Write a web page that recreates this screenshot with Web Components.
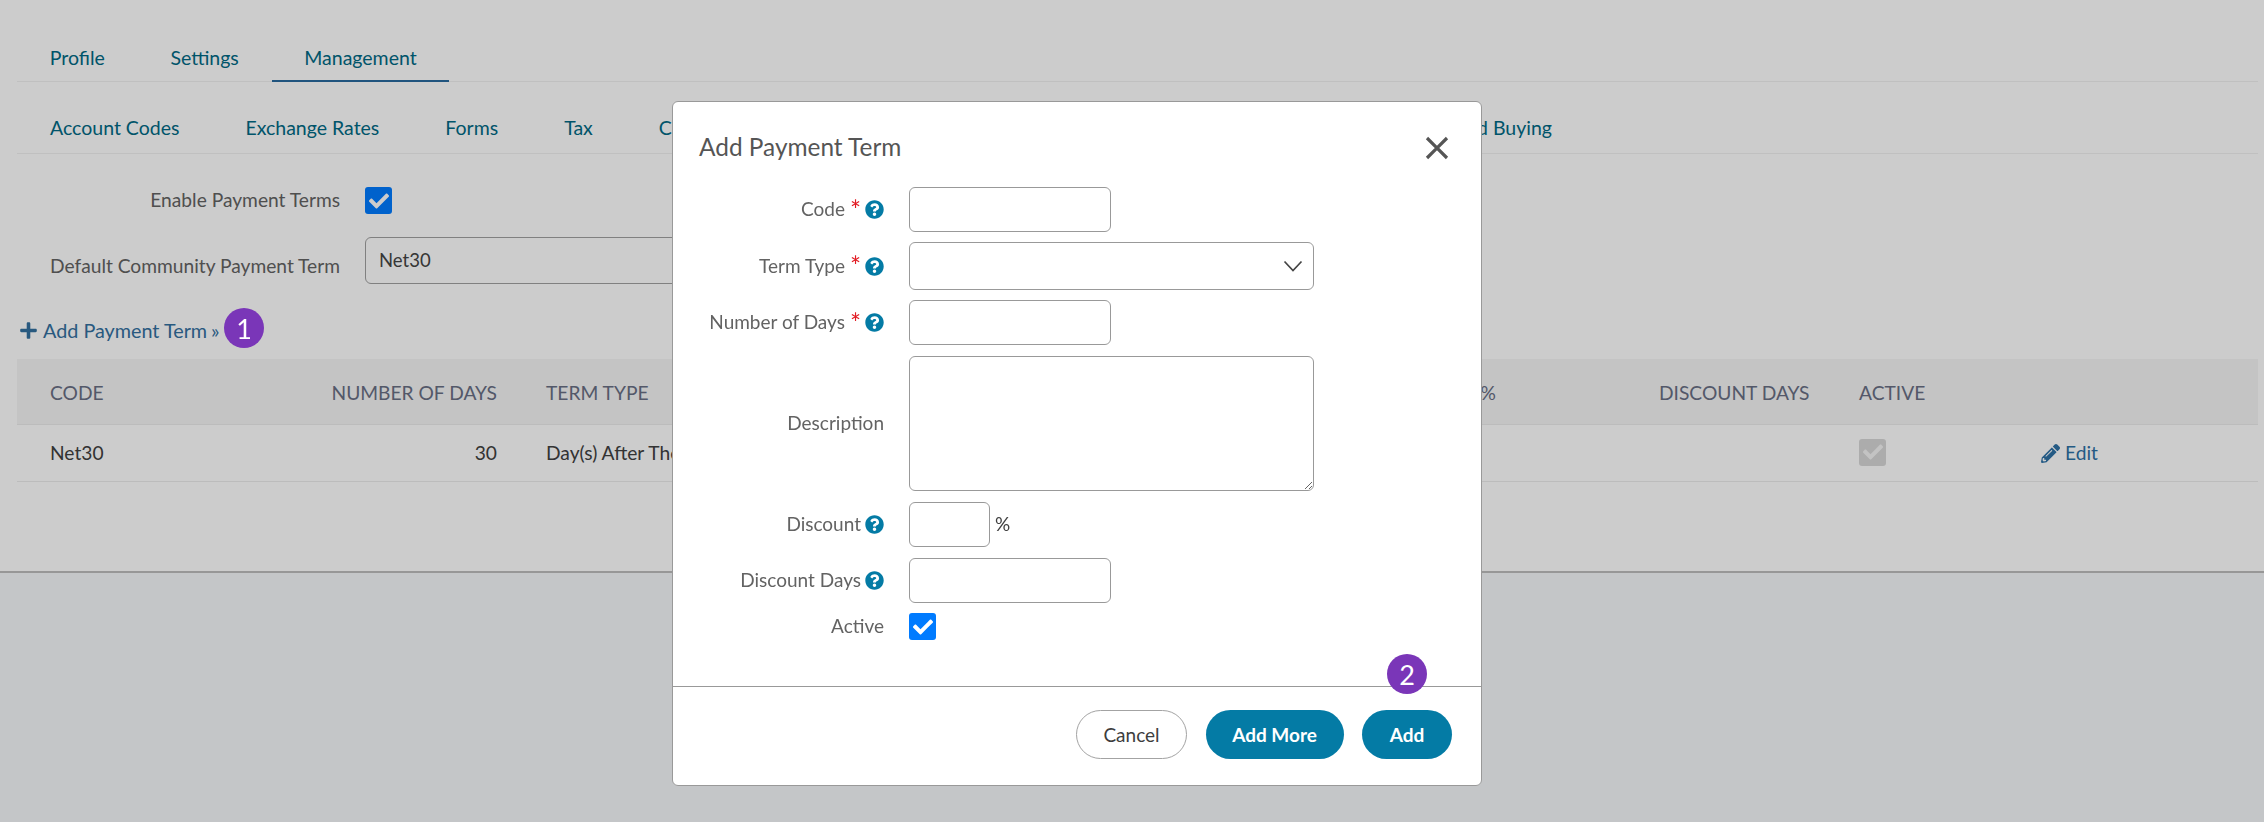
<!DOCTYPE html>
<html>
<head>
<meta charset="utf-8">
<title>Add Payment Term</title>
<style>
  html, body { margin: 0; padding: 0; }
  body { width: 2264px; height: 822px; overflow: hidden; background: #f6f8fa; font: 19px Lato, "Open Sans", sans-serif; color: #404040; }
</style>
</head>
<body>
<settings-page>
  <tab-bar slot="tabs" kind="main">
    <nav-tab>Profile</nav-tab>
    <nav-tab>Settings</nav-tab>
    <nav-tab active>Management</nav-tab>
  </tab-bar>
  <tab-bar slot="tabs" kind="sub">
    <nav-tab>Account Codes</nav-tab>
    <nav-tab>Exchange Rates</nav-tab>
    <nav-tab>Forms</nav-tab>
    <nav-tab>Tax</nav-tab>
    <nav-tab>Cost</nav-tab>
    <nav-tab last>Advanced Buying</nav-tab>
  </tab-bar>
  <terms-settings slot="form"></terms-settings>
  <add-link slot="form"></add-link>
  <data-table slot="table"></data-table>
</settings-page>
<modal-overlay></modal-overlay>
<payment-term-modal></payment-term-modal>

<script>
const ICONS = {
  check: '<svg viewBox="0 0 512 512"><path fill="currentColor" d="M173.898 439.404l-166.4-166.4c-9.997-9.997-9.997-26.206 0-36.204l36.203-36.204c9.997-9.998 26.207-9.998 36.204 0L192 312.69 432.095 72.596c9.997-9.997 26.207-9.997 36.204 0l36.203 36.204c9.997 9.997 9.997 26.206 0 36.204l-294.4 294.401c-9.998 9.997-26.207 9.997-36.204-.001z"/></svg>',
  help: '<svg viewBox="0 0 512 512"><path fill="currentColor" d="M504 256c0 136.997-111.043 248-248 248S8 392.997 8 256C8 119.083 119.043 8 256 8s248 111.083 248 248zM262.655 90c-54.497 0-89.255 22.957-116.549 63.758-3.536 5.286-2.353 12.415 2.715 16.258l34.699 26.31c5.205 3.947 12.621 3.008 16.665-2.122 17.864-22.658 30.113-35.797 57.303-35.797 20.429 0 45.698 13.148 45.698 32.958 0 14.976-12.363 22.667-32.534 33.976C247.128 238.528 216 254.941 216 296v4c0 6.627 5.373 12 12 12h56c6.627 0 12-5.373 12-12v-1.333c0-28.462 83.186-29.647 83.186-106.667 0-58.002-60.165-102-116.531-102zM256 338c-25.365 0-46 20.635-46 46 0 25.364 20.635 46 46 46s46-20.636 46-46c0-25.365-20.635-46-46-46z"/></svg>',
  plus: '<svg viewBox="0 0 448 512"><path fill="currentColor" d="M416 208H272V64c0-17.67-14.33-32-32-32h-32c-17.67 0-32 14.33-32 32v144H32c-17.67 0-32 14.33-32 32v32c0 17.67 14.33 32 32 32h144v144c0 17.67 14.33 32 32 32h32c17.67 0 32-14.33 32-32V304h144c17.67 0 32-14.33 32-32v-32c0-17.67-14.33-32-32-32z"/></svg>',
  pencil: '<svg viewBox="0 0 512 512"><path fill="currentColor" d="M497.9 142.1l-46.1 46.1c-4.7 4.7-12.3 4.7-17 0l-111-111c-4.7-4.7-4.7-12.3 0-17l46.1-46.1c18.7-18.7 49.1-18.7 67.9 0l60.1 60.1c18.8 18.7 18.8 49.1 0 67.9zM284.2 99.8L21.6 362.4.4 483.9c-2.9 16.4 11.4 30.6 27.8 27.8l121.5-21.3 262.6-262.6c4.7-4.7 4.7-12.3 0-17l-111-111c-4.8-4.7-12.4-4.7-17.1 0zM124.1 339.9c-5.5-5.5-5.5-14.3 0-19.8l154-154c5.5-5.5 14.3-5.5 19.8 0s5.5 14.3 0 19.8l-154 154c-5.5 5.5-14.3 5.5-19.8 0zM88 424h48v36.3l-64.5 11.3-31.1-31.1L51.7 376H88v48z"/></svg>'
};

class Base extends HTMLElement {
  constructor() {
    super();
    this.attachShadow({ mode: "open" });
  }
}

class SettingsPage extends Base {
  connectedCallback() {
    this.shadowRoot.innerHTML = `
    <style>
      :host { display: block; }
      .main { height: 571px; box-sizing: content-box; padding: 0 6px 0 17px; background: #fff; border-bottom: 2px solid #bdbdbd; }
      .form { display: block; }
    </style>
    <div class="main">
      <slot name="tabs"></slot>
      <div class="form"><slot name="form"></slot></div>
      <slot name="table"></slot>
    </div>`;
  }
}

class TabBar extends Base {
  connectedCallback() {
    const main = this.getAttribute("kind") === "main";
    this.shadowRoot.innerHTML = `
    <style>
      :host { display: flex; box-sizing: border-box; border-bottom: 1px solid #f0f0f0;
        padding: ${main ? "33px 0 0" : "21px 673px 0 0"}; height: ${main ? 82 : 72}px; --tab-h: ${main ? 48 : 49}px; --tab-pad: ${main ? 32.75 : 33}px; }
    </style>
    <slot></slot>`;
  }
}

class NavTab extends Base {
  connectedCallback() {
    const active = this.hasAttribute("active");
    const last = this.hasAttribute("last");
    this.shadowRoot.innerHTML = `
    <style>
      :host { display: flex; align-items: center; box-sizing: border-box; height: var(--tab-h); padding: 0 var(--tab-pad);
        color: #006a85; font-size: 19.5px; white-space: nowrap; ${last ? "margin-left: auto;" : ""}
        ${active ? "border-bottom: 2px solid #286a9e; height: calc(var(--tab-h) + 1px); padding-top: 1px;" : ""} }
    </style>
    <slot></slot>`;
  }
}

class CheckBox extends Base {
  connectedCallback() {
    const off = this.hasAttribute("disabled");
    this.shadowRoot.innerHTML = `
    <style>
      :host { display: inline-flex; align-items: center; justify-content: center; box-sizing: border-box; width: 27px; height: 27px;
        border-radius: 3px; background: ${off ? "#d8d8d8" : "#007bff"}; color: ${off ? "#f4f4f4" : "#fff"}; flex: none; }
      svg { width: 20px; height: 20px; display: block; }
    </style>
    ${ICONS.check}`;
  }
}

class TermsSettings extends Base {
  connectedCallback() {
    this.shadowRoot.innerHTML = `
    <style>
      :host { display: block; padding: 33px 0 0 33px; }
      .row { display: flex; gap: 25px; }
      label { width: 290px; text-align: right; color: #636363; font-size: 19.2px; line-height: 24px; white-space: nowrap; }
      .one { align-items: center; height: 27px; }
      .one label { padding-bottom: 2px; }
      .two { margin-top: 23px; }
      .two label { padding-top: 17px; }
      select { appearance: none; width: 500px; height: 47px; box-sizing: border-box; border: 1px solid #a0a0a0; border-radius: 6px;
        background: #fff; padding: 0 13px 1px; font: 18.5px Lato, sans-serif; color: #444; }
    </style>
    <div class="row one"><label>Enable Payment Terms</label><check-box></check-box></div>
    <div class="row two"><label>Default Community Payment Term</label>
      <select><option>Net30</option></select></div>`;
  }
}

class AddLink extends Base {
  connectedCallback() {
    this.shadowRoot.innerHTML = `
    <style>
      :host { display: flex; align-items: center; height: 40px; margin: 24px 0 11px; padding-left: 3px; color: #33709f; font-size: 19.8px; white-space: nowrap; }
      svg { width: 17px; height: 19px; margin: 5px 6px 0 0; display: block; }
      .txt { padding-top: 4px; }
      .arrows { margin-left: 4px; padding-top: 4px; }
      step-badge { margin-left: 4.5px; }
    </style>
    ${ICONS.plus}<span class="txt">Add Payment Term</span><span class="arrows">»</span><step-badge>1</step-badge>`;
  }
}

class StepBadge extends Base {
  connectedCallback() {
    this.shadowRoot.innerHTML = `
    <style>
      :host { display: inline-flex; align-items: center; justify-content: center; width: 40px; height: 40px; border-radius: 50%;
        background: #7a36b8; color: #fff; font: 27px Lato, sans-serif; flex: none; position: relative; z-index: 20; }
    </style>
    <slot></slot>`;
  }
}

class DataTable extends Base {
  connectedCallback() {
    this.shadowRoot.innerHTML = `
    <style>
      :host { display: block; }
      .grid { display: grid; grid-template-columns: 98px 300px 511px 390px 65px 151px 132px 1fr; column-gap: 49px; align-items: center; padding-left: 33px; }
      .head { height: 66px; box-sizing: border-box; padding-top: 2px; background: #f5f5f5; border-bottom: 1px solid #ececec; color: #686e84; font-size: 19.2px; }
      .row { height: 57px; box-sizing: border-box; border-bottom: 1px solid #ececec; color: #404040; font-size: 19.2px; }
      .row > span:not(.edit) { padding-bottom: 2px; }
      .row > .boxcell { padding: 0; display: flex; }
      .right { text-align: right; }
      .nowrap { white-space: nowrap; }
      .edit { display: flex; align-items: center; gap: 5px; color: #2e71a6; margin-left: 1px; }
      .edit span { padding-bottom: 2px; }
      .edit svg { width: 19px; height: 19px; display: block; }
    </style>
    <div class="grid head">
      <span>CODE</span><span class="right">NUMBER OF DAYS</span><span class="nowrap">TERM TYPE</span><span class="right">DISCOUNT %</span><span></span><span class="nowrap">DISCOUNT DAYS</span><span>ACTIVE</span><span></span>
    </div>
    <div class="grid row">
      <span>Net30</span><span class="right">30</span><span class="nowrap">Day(s) After The Invoice</span><span></span><span></span><span></span><span class="boxcell"><check-box disabled></check-box></span>
      <span class="edit">${ICONS.pencil}<span>Edit</span></span>
    </div>`;
  }
}

class ModalOverlay extends Base {
  connectedCallback() {
    this.shadowRoot.innerHTML = `
    <style>
      :host { display: block; position: fixed; inset: 0; background: rgba(0,0,0,.2); z-index: 10; }
    </style>`;
  }
}

class FormField extends Base {
  connectedCallback() {
    const req = this.hasAttribute("required");
    const help = this.hasAttribute("help");
    this.shadowRoot.innerHTML = `
    <style>
      :host { display: grid; grid-template-columns: 211px 1fr; column-gap: 25px; align-items: center; }
      .label { display: flex; justify-content: flex-end; align-items: center; color: #636363; font-size: 19px; white-space: nowrap; }
      .text { padding-bottom: 2px; }
      .star { color: #e21b23; margin-left: 5px; font-size: 26px; line-height: 14px; height: 14px; }
      .help { color: #047ba5; width: 19px; height: 19px; margin-left: 4px; }
      .help svg { display: block; width: 19px; height: 19px; }
      .control { display: flex; align-items: center; }
    </style>
    <div class="label"><span class="text">${this.getAttribute("label")}</span>${req ? '<span class="star">*</span>' : ""}${help ? `<span class="help">${ICONS.help}</span>` : ""}</div>
    <div class="control"><slot></slot></div>`;
  }
}

class TextBox extends Base {
  connectedCallback() {
    const w = this.getAttribute("w") || 202;
    const h = this.getAttribute("h") || 45;
    const type = this.getAttribute("type") || "input";
    const css = `width:${w}px;height:${h}px;box-sizing:border-box;border:1px solid #999;border-radius:6px;background:#fff;display:block;margin:0;outline:none;font:18px Lato,sans-serif;`;
    let el = `<input style="${css}">`;
    if (type === "area") el = `<textarea style="${css}resize:both;"></textarea>`;
    if (type === "select") el = `<div class="sel"><select style="${css}appearance:none;"><option></option></select>
      <svg viewBox="0 0 20 12"><path d="M1.5 1.5 10 10.5 18.5 1.5" fill="none" stroke="#444" stroke-width="1.7"/></svg></div>`;
    this.shadowRoot.innerHTML = `
    <style>
      :host { display: block; }
      .sel { position: relative; }
      .sel svg { position: absolute; right: 11px; top: 18px; width: 20px; height: 12px; }
    </style>
    ${el}`;
  }
}

class PillButton extends Base {
  connectedCallback() {
    const primary = this.hasAttribute("primary");
    this.shadowRoot.innerHTML = `
    <style>
      :host { display: inline-flex; align-items: center; justify-content: center; box-sizing: border-box; height: 49px; border-radius: 25px;
        width: ${this.getAttribute("w")}px; font-size: 19px; font-weight: ${primary ? 700 : 400};
        ${primary ? "background: #047ba5; color: #fff;" : "background: #fff; color: #3d3d3d; border: 1px solid #a3a3a3;"} }
    </style>
    <slot></slot>`;
  }
}

class PaymentTermModal extends Base {
  connectedCallback() {
    this.shadowRoot.innerHTML = `
    <style>
      :host { display: block; position: absolute; left: 672px; top: 101px; width: 810px; height: 685px; box-sizing: border-box; z-index: 15;
        background: #fff; border: 1px solid #999; border-radius: 6px; }
      header { display: flex; justify-content: space-between; align-items: center; height: 85px; box-sizing: border-box; padding: 4px 32px 0 26px; }
      h2 { margin: 0; font-size: 24.4px; font-weight: 400; color: #555; }
      .close { width: 24px; height: 24px; display: block; margin-top: 2px; }
      .fields { display: flex; flex-direction: column; gap: 10px; height: 499px; box-sizing: border-box; }
      .push { margin-top: 1px; }
      footer { display: flex; justify-content: flex-end; gap: 18.5px; border-top: 1px solid #999; padding: 23px 29px 0 0; }
      .pct { margin-left: 5px; color: #404040; font-size: 19px; padding-bottom: 2px; }
      step-badge { position: absolute; left: 714px; top: 552px; }
    </style>
    <header>
      <h2>Add Payment Term</h2>
      <svg class="close" viewBox="0 0 24 24"><path d="M2 2 22 22M22 2 2 22" stroke="#555" stroke-width="3.2" fill="none"/></svg>
    </header>
    <div class="fields">
      <form-field label="Code" required help><text-box></text-box></form-field>
      <form-field label="Term Type" required help><text-box type="select" w="405" h="48"></text-box></form-field>
      <form-field label="Number of Days" required help><text-box></text-box></form-field>
      <form-field class="push" label="Description"><text-box type="area" w="405" h="135"></text-box></form-field>
      <form-field class="push" label="Discount" help><text-box w="81"></text-box><span class="pct">%</span></form-field>
      <form-field class="push" label="Discount Days" help><text-box></text-box></form-field>
      <form-field label="Active"><check-box></check-box></form-field>
    </div>
    <step-badge>2</step-badge>
    <footer>
      <pill-button w="111">Cancel</pill-button>
      <pill-button w="138" primary>Add More</pill-button>
      <pill-button w="90" primary>Add</pill-button>
    </footer>`;
  }
}

customElements.define("settings-page", SettingsPage);
customElements.define("tab-bar", TabBar);
customElements.define("nav-tab", NavTab);
customElements.define("check-box", CheckBox);
customElements.define("terms-settings", TermsSettings);
customElements.define("add-link", AddLink);
customElements.define("step-badge", StepBadge);
customElements.define("data-table", DataTable);
customElements.define("modal-overlay", ModalOverlay);
customElements.define("form-field", FormField);
customElements.define("text-box", TextBox);
customElements.define("pill-button", PillButton);
customElements.define("payment-term-modal", PaymentTermModal);
</script>
</body>
</html>
